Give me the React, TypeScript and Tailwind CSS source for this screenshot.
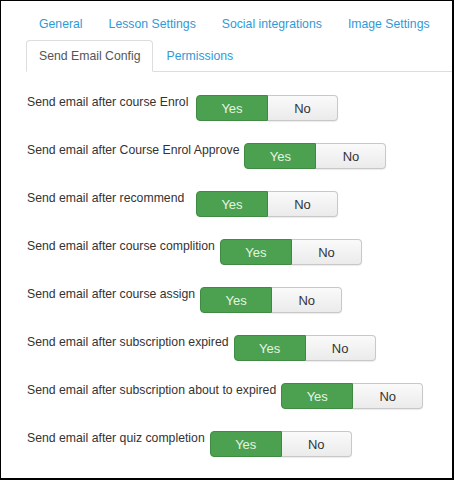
import React from "react";

// Tabs across the top of the settings panel
const tabs = [
  "General",
  "Lesson Settings",
  "Social integrations",
  "Image Settings",
  "Send Email Config",
  "Permissions",
];

const activeTab = "Send Email Config";

// Email notification switches
const settings = [
  "Send email after course Enrol",
  "Send email after Course Enrol Approve",
  "Send email after recommend",
  "Send email after course complition",
  "Send email after course assign",
  "Send email after subscription expired",
  "Send email after subscription about to expired",
  "Send email after quiz completion",
];

const YesNo: React.FC = () => (
  <div className="flex h-[26px] shrink-0 text-[13px] leading-none">
    <button className="w-[72px] h-full rounded-l-[4px] border border-[#3f8b43] bg-[#4ba150] text-[#e6f4e6]">
      Yes
    </button>
    <button className="w-[70px] h-full rounded-r-[4px] border border-l-0 border-[#c8c8c8] bg-gradient-to-b from-[#fafafa] to-[#ebebeb] text-[#333] shadow-[0_1px_1px_rgba(0,0,0,0.08)]">
      No
    </button>
  </div>
);

const App: React.FC = () => {
  return (
    <div className="w-[454px] h-[480px] bg-white border-t border-l border-r-2 border-b-2 border-black overflow-hidden font-['Liberation_Sans',Arial,sans-serif]">
      {/* Tab list, wraps onto a second line */}
      <ul className="flex flex-wrap ml-[25px] mt-[6px] border-b border-[#dddddd] text-[12.25px] leading-[16px]">
        {tabs.map((tab) => (
          <li key={tab} className="-mb-px">
            <a
              className={`block px-[12px] py-[7px] mt-px rounded-t-[4px] border ${
                tab === activeTab
                  ? "border-[#dddddd] border-b-white bg-white text-[#555]"
                  : "border-transparent text-[#2f9ad8]"
              }`}
            >
              {tab}
            </a>
          </li>
        ))}
      </ul>

      {/* Settings rows */}
      <div className="flex flex-col gap-[22px] pl-[26px] pt-[23px]">
        {settings.map((label) => (
          <div key={label} className="flex items-start gap-[5px]">
            <span className="min-w-[164px] text-[12.25px] leading-[14px] text-[#333]">
              {label}
            </span>
            <YesNo />
          </div>
        ))}
      </div>
    </div>
  );
};

export default App;
